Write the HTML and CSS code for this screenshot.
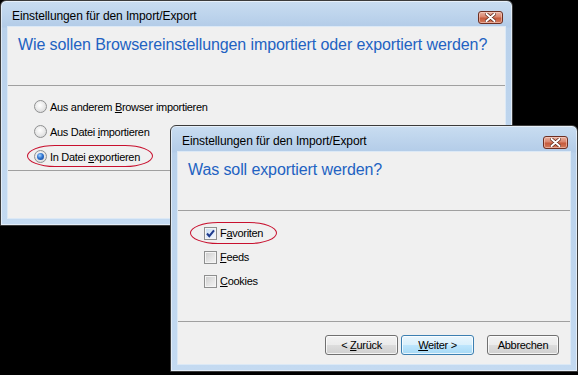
FILE: index.html
```html
<!DOCTYPE html>
<html lang="de">
<head>
    <meta charset="UTF-8">
    <meta name="viewport" content="width=device-width, initial-scale=1.0">
    <title>Einstellungen für den Import/Export</title>
    <link rel="stylesheet" href="styles.css">
</head>
<body>
    <div class="desktop">
        <!-- first step of the wizard, behind -->
        <div class="window window-back">
            <div class="titlebar">
                <span class="title">Einstellungen für den Import/Export</span>
                <span class="close">
                    <svg width="11" height="9" viewBox="0 0 11 9">
                        <path d="M1.5 1 L9.5 8 M9.5 1 L1.5 8" stroke="#5a2418" stroke-width="3.4" stroke-linecap="round"/>
                        <path d="M1.5 1 L9.5 8 M9.5 1 L1.5 8" stroke="#fff" stroke-width="2" stroke-linecap="round"/>
                    </svg>
                </span>
            </div>
            <div class="client">
                <div class="instruction">Wie sollen Browsereinstellungen importiert oder exportiert werden?</div>
                <div class="options radios">
                    <label class="option"><span class="radio"></span><span class="text">Aus anderem <u>B</u>rowser importieren</span></label>
                    <label class="option"><span class="radio"></span><span class="text">Aus Datei <u>i</u>mportieren</span></label>
                    <label class="option"><span class="radio checked"></span><span class="text">In Datei <u>e</u>xportieren</span><span class="mark mark-export"></span></label>
                </div>
                <div class="footer footer-back"></div>
            </div>
        </div>

        <!-- second step, in front -->
        <div class="window window-front">
            <div class="titlebar">
                <span class="title">Einstellungen für den Import/Export</span>
                <span class="close">
                    <svg width="11" height="9" viewBox="0 0 11 9">
                        <path d="M1.5 1 L9.5 8 M9.5 1 L1.5 8" stroke="#5a2418" stroke-width="3.4" stroke-linecap="round"/>
                        <path d="M1.5 1 L9.5 8 M9.5 1 L1.5 8" stroke="#fff" stroke-width="2" stroke-linecap="round"/>
                    </svg>
                </span>
            </div>
            <div class="client">
                <div class="instruction">Was soll exportiert werden?</div>
                <div class="options checks">
                    <label class="option">
                        <span class="checkbox checked">
                            <svg width="11" height="11" viewBox="0 0 11 11"><path d="M2 5.5 L4.3 8.2 L9 2.3" fill="none" stroke="#1e3a8c" stroke-width="2"/></svg>
                        </span>
                        <span class="text">F<u>a</u>voriten</span>
                        <span class="mark mark-fav"></span>
                    </label>
                    <label class="option"><span class="checkbox"></span><span class="text"><u>F</u>eeds</span></label>
                    <label class="option"><span class="checkbox"></span><span class="text"><u>C</u>ookies</span></label>
                </div>
                <div class="footer footer-front">
                    <button class="btn">&lt; <u>Z</u>urück</button>
                    <button class="btn btn-default"><u>W</u>eiter &gt;</button>
                    <button class="btn btn-cancel">Abbrechen</button>
                </div>
            </div>
        </div>
    </div>
</body>
</html>
```

FILE: styles.css
```css
body {
    margin: 0;
    background: #000;
    font-family: "Liberation Sans", Arial, sans-serif;
}
.desktop {
    position: relative;
    width: 578px;
    height: 375px;
    background: #000;
    overflow: hidden;
}

/* window frame */
.window {
    position: absolute;
    box-sizing: border-box;
    display: flex;
    flex-direction: column;
    padding: 0 7px 7px 7px;
    border: 1px solid #3b3b3b;
    border-radius: 6px 6px 0 0;
    background: linear-gradient(to bottom, #c9ddf1 0, #b3cce8 26px, #b9d1eb 27px, #c4daf1 100%);
    box-shadow: inset 0 0 0 1px rgba(255, 255, 255, 0.55);
}
.window-back {
    left: 0;
    top: 0;
    width: 513px;
    height: 226px;
}
.window-front {
    left: 170px;
    top: 125px;
    width: 408px;
    height: 247px;
}
.titlebar {
    height: 26px;
    display: flex;
    justify-content: space-between;
    align-items: flex-start;
    padding: 0 2px 0 4px;
}
.title {
    padding-top: 8px;
    font-size: 12px;
    line-height: 14px;
    letter-spacing: -0.1px;
    color: #000;
}
.close {
    margin-top: 10px;
    width: 25px;
    height: 13px;
    box-sizing: border-box;
    display: flex;
    align-items: center;
    justify-content: center;
    border: 1px solid #6d2f22;
    border-radius: 3px;
    background: linear-gradient(to bottom, #e8b2a2 0, #d9856d 45%, #c65a3c 55%, #d27a5c 100%);
    box-shadow: inset 0 0 0 1px rgba(255, 220, 210, 0.5);
}
.close svg {
    display: block;
}

/* client area */
.client {
    flex: 1;
    display: flex;
    flex-direction: column;
    background: #f0f0f0;
    box-shadow: 0 0 0 1px #dce9f6;
}
.instruction {
    box-sizing: border-box;
    height: 59px;
    padding: 8px 10px 0 10px;
    border-bottom: 1px solid #a0a0a0;
    font-size: 16px;
    line-height: 20px;
    letter-spacing: -0.1px;
    color: #2262c2;
}
.options {
    display: flex;
    flex-direction: column;
    box-sizing: border-box;
    padding-left: 26px;
}
.radios {
    height: 84px;
    padding-top: 8px;
}
.radios .option {
    height: 25px;
}
.checks {
    height: 110px;
    padding-top: 10px;
}
.checks .option {
    height: 24px;
}
.option {
    position: relative;
    display: flex;
    align-items: center;
    gap: 3px;
    align-self: flex-start;
    font-size: 11px;
    letter-spacing: -0.3px;
    color: #000;
}
.text {
    white-space: nowrap;
}
.option u {
    text-decoration-thickness: 1px;
    text-underline-offset: 1px;
}

/* radio buttons */
.radio {
    position: relative;
    width: 13px;
    height: 13px;
    box-sizing: border-box;
    border: 1px solid #8f9091;
    border-radius: 50%;
    background: radial-gradient(circle at 45% 40%, #ffffff 0, #ececec 45%, #cfd0d1 100%);
}
.radio.checked::after {
    content: "";
    position: absolute;
    left: 2px;
    top: 2px;
    width: 7px;
    height: 7px;
    border-radius: 50%;
    background: radial-gradient(circle at 40% 35%, #a9d6ff 0, #2e74d0 45%, #173f88 100%);
}

/* check boxes */
.checkbox {
    width: 13px;
    height: 13px;
    box-sizing: border-box;
    display: flex;
    align-items: center;
    justify-content: center;
    border: 1px solid #8e8f8f;
    background: linear-gradient(135deg, #cbcbcb 0, #e6e6e6 60%, #f4f4f4 100%);
    box-shadow: inset 0 0 0 1px #f4f4f4;
}
.checkbox.checked {
    background: linear-gradient(135deg, #c7dcf2 0, #e4eefa 60%, #f5f9fe 100%);
}
.checkbox svg {
    display: block;
}

/* red annotation ellipses */
.mark {
    position: absolute;
    border: 1px solid #c8102e;
    border-radius: 28px / 11px;
    box-sizing: border-box;
    height: 22px;
}
.mark-export {
    left: -7px;
    top: 1px;
    width: 126px;
}
.mark-fav {
    left: -14px;
    top: 1px;
    width: 87px;
}

/* footer with buttons */
.footer {
    flex: 1;
    border-top: 1px solid #a0a0a0;
}
.footer-front {
    display: flex;
    justify-content: flex-end;
    align-items: flex-start;
    padding: 13px 11px 0 0;
    gap: 3px;
}
.btn {
    width: 73px;
    height: 20px;
    padding: 0;
    border: 1px solid #707070;
    border-radius: 3px;
    background: linear-gradient(to bottom, #f2f2f2 0, #ebebeb 50%, #dddddd 50%, #cfcfcf 100%);
    box-shadow: inset 0 0 0 1px rgba(255, 255, 255, 0.75);
    font-family: "Liberation Sans", Arial, sans-serif;
    font-size: 11px;
    letter-spacing: -0.3px;
    color: #000;
}
.btn-default {
    border-color: #3c7fb1;
    background: linear-gradient(to bottom, #eaf6fd 0, #d9f0fc 50%, #bee6fd 50%, #a7d9f5 100%);
}
.btn-cancel {
    width: 72px;
    margin-left: 10px;
}
```
